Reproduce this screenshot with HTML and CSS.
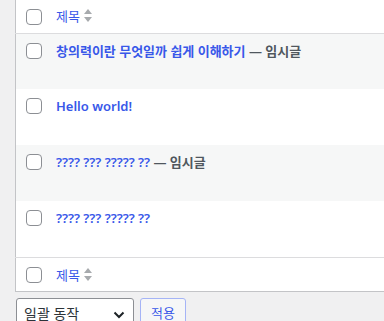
FILE: index.html
```html
<!DOCTYPE html>
<html lang="ko">
<head>
    <meta charset="UTF-8">
    <title>글</title>
    <link rel="stylesheet" href="styles.css">
</head>
<body>
    <div class="wrap">
        <table class="posts">
            <thead>
                <tr>
                    <td class="check"><input type="checkbox"></td>
                    <th class="title-col"><a href="#">제목</a><span class="sort"><svg width="8" height="13" viewBox="0 0 8 13"><path d="M4 0L8 5H0Z" fill="#a7aaad"/><path d="M4 13L8 8H0Z" fill="#a7aaad"/></svg></span></th>
                </tr>
            </thead>
            <tbody>
                <tr class="alt">
                    <td class="check"><input type="checkbox"></td>
                    <td class="title"><a class="row-title" href="#">창의력이란 무엇일까 쉽게 이해하기</a> <span class="state">— 임시글</span></td>
                </tr>
                <tr>
                    <td class="check"><input type="checkbox"></td>
                    <td class="title"><a class="row-title" href="#">Hello world!</a></td>
                </tr>
                <tr class="alt">
                    <td class="check"><input type="checkbox"></td>
                    <td class="title"><a class="row-title" href="#">???? ??? ????? ??</a> <span class="state">— 임시글</span></td>
                </tr>
                <tr>
                    <td class="check"><input type="checkbox"></td>
                    <td class="title"><a class="row-title" href="#">???? ??? ????? ??</a></td>
                </tr>
            </tbody>
            <tfoot>
                <tr>
                    <td class="check"><input type="checkbox"></td>
                    <th class="title-col"><a href="#">제목</a><span class="sort"><svg width="8" height="13" viewBox="0 0 8 13"><path d="M4 0L8 5H0Z" fill="#a7aaad"/><path d="M4 13L8 8H0Z" fill="#a7aaad"/></svg></span></th>
                </tr>
            </tfoot>
        </table>
        <div class="bulk">
            <div class="select">일괄 동작<svg width="12" height="8" viewBox="0 0 12 8"><path d="M1.5 1.5L6 6L10.5 1.5" fill="none" stroke="#1d2327" stroke-width="2"/></svg></div>
            <button class="apply">적용</button>
        </div>
    </div>
</body>
</html>
```
FILE: styles.css
```css
body {
    margin: 0;
    background: #f0f0f1;
    font-family: "Noto Sans", "Noto Sans CJK KR", sans-serif;
    font-size: 13px;
    color: #3c434a;
    overflow: hidden;
}
.wrap {
    padding-left: 15px;
    width: 420px;
}
.posts {
    width: 100%;
    border-collapse: collapse;
    background: #fff;
    border: 1px solid #c3c4c7;
    border-top: none;
}
.posts td, .posts th {
    padding: 0;
    text-align: left;
    vertical-align: top;
}
.posts a {
    color: #3858e9;
    text-decoration: none;
}
.check {
    width: 40px;
}
.check input {
    appearance: none;
    display: block;
    width: 16px;
    height: 16px;
    margin: 9px 0 0 10px;
    border: 1px solid #8c8f94;
    border-radius: 4px;
    background: #fff;
}
thead tr {
    height: 33px;
    border-bottom: 1px solid #dcdcde;
}
tfoot tr {
    height: 34px;
    border-top: 1px solid #dcdcde;
}
.title-col {
    font-weight: 400;
    font-size: 13px;
    padding-top: 7px !important;
    line-height: 19px;
}
tfoot .title-col {
    padding-top: 8px !important;
}
tfoot .check input {
    margin-top: 9px;
}
.sort {
    display: inline-block;
    margin-left: 4px;
    vertical-align: -1px;
}
.sort svg {
    display: block;
}
tbody tr {
    height: 56px;
}
.title {
    padding-top: 7px !important;
    line-height: 20px;
}
.alt {
    background: #f6f7f7;
}
.row-title {
    font-weight: 600;
    font-size: 13px;
}
.state {
    font-weight: 600;
    color: #50575e;
}
.bulk {
    display: flex;
    gap: 6px;
    margin-top: 6px;
    padding-left: 1px;
}
.select {
    width: 118px;
    height: 30px;
    box-sizing: border-box;
    border: 1px solid #8c8f94;
    border-radius: 3px;
    background: #fff;
    padding: 4px 8px 0 7px;
    font-size: 14px;
    color: #2c3338;
    display: flex;
    justify-content: space-between;
    align-items: flex-start;
}
.select svg {
    margin-top: 8px;
}
.apply {
    width: 46px;
    height: 30px;
    border: 1px solid #a5b4f6;
    border-radius: 3px;
    background: #f6f7f7;
    color: #3858e9;
    font-family: inherit;
    font-size: 13px;
    padding: 0;
    line-height: 26px;
}
```
